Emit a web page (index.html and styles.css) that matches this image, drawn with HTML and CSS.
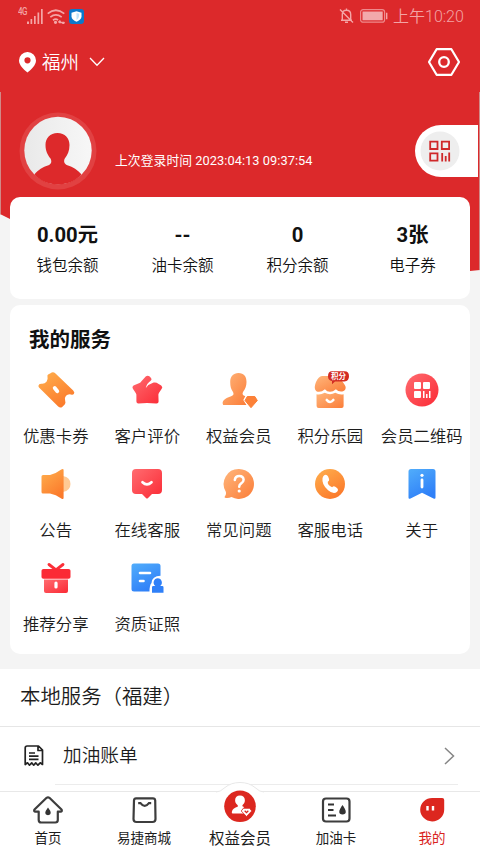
FILE: index.html
```html
<!DOCTYPE html>
<html lang="zh-CN">
<head>
<meta charset="utf-8">
<title>我的</title>
<link rel="stylesheet" href="styles.css">
</head>
<body>
<svg class="defs" width="0" height="0" aria-hidden="true">
  <defs>
    <linearGradient id="orange" x1="0" y1="0" x2="0.6" y2="1"><stop offset="0" stop-color="#ffb04e"/><stop offset="1" stop-color="#fb7b2c"/></linearGradient>
    <linearGradient id="peach" x1="0" y1="0" x2="1" y2="1"><stop offset="0" stop-color="#ffb67c"/><stop offset="1" stop-color="#fb7d38"/></linearGradient>
    <linearGradient id="red" x1="0" y1="0" x2="1" y2="1"><stop offset="0" stop-color="#ff6c70"/><stop offset="1" stop-color="#fb2a35"/></linearGradient>
    <linearGradient id="blue" x1="0" y1="0" x2="0.5" y2="1"><stop offset="0" stop-color="#51adfb"/><stop offset="1" stop-color="#2f80f8"/></linearGradient>
    <linearGradient id="face" x1="0" y1="0" x2="1" y2="0"><stop offset="0" stop-color="#e9e9e9"/><stop offset="1" stop-color="#f7f7f7"/></linearGradient>
  </defs>
</svg>
<div class="page">
  <header class="hero">
    <div class="status">
      <span class="net">4G</span>
      <svg class="signal" width="16" height="15" viewBox="0 0 16 15" fill="#f4a5a6"><path d="M0 12.500h2V15H0zM3.500 10h1.700v5H3.500zM7 7h1.700v8H7zM10.500 3.500h1.700v11.500h-1.700zM14 0h1.700v15H14z"/></svg>
      <svg class="wifi" width="18" height="15" viewBox="0 0 18 15" fill="none" stroke="#f4a5a6" stroke-width="1.700"><path d="M.7 4.600q8-6.700 16.600 0M3.300 8.100q5.500-4.500 11.400 0M6 11.200q2.800-2.100 5 0"/><circle cx="8.500" cy="13.300" r=".8"/><path d="M12 13.500h5M13.500 11.700l-2 1.800M15.500 15l2-1.800"/></svg>
      <svg class="shield" width="15" height="15" viewBox="0 0 15 15"><rect width="15" height="15" rx="3" fill="#0c78cb"/><path d="M7.500 2.300l5 1.500v3.700c0 2.400-2.200 4.200-5 5.200-2.800-1-5-2.800-5-5.200V3.800z" fill="#fff"/><path d="M7.500 4v7q2.700-1.500 2.800-6.200z" fill="#bfe3fa"/></svg>
      <svg class="bell" width="15" height="16" viewBox="0 0 15 16" fill="none" stroke="#f4a5a6" stroke-width="1.400"><path d="M2 12.200h11M3.300 12V6.500q0-4.200 4.200-4.200t4.200 4.200V12M7.500 .5v1.800M6 14.300h3M1 1.500l13 13"/></svg>
      <svg class="battery" width="28" height="14" viewBox="0 0 28 14"><rect x=".6" y=".6" width="24" height="12.600" rx="2.500" fill="none" stroke="#ee8a8c" stroke-width="1.200"/><rect x="2.500" y="2.500" width="20.200" height="8.800" fill="#f2a9ab"/><path d="M26.700 3.800v6.400" stroke="#f4a5a6" stroke-width="1.400"/></svg>
      <span class="clock">上午10:20</span>
    </div>
    <div class="location">
      <svg width="17" height="21" viewBox="0 0 17 21"><path fill="#fff" fill-rule="evenodd" d="M8.500 0A8.400 8.400 0 0 1 17 8.400C17 13 12.500 17 8.500 20.600 4.500 17 0 13 0 8.400A8.400 8.400 0 0 1 8.500 0zm0 5.200a3.100 3.100 0 1 0 0 6.200 3.100 3.100 0 0 0 0-6.200z"/></svg>
      <span class="city">福州</span>
      <svg class="chevron" width="16" height="10" viewBox="0 0 16 10" fill="none" stroke="#fff" stroke-width="1.300"><path d="M1 1l7 7.200L15 1"/></svg>
      <svg class="settings" width="32" height="28" viewBox="0 0 32 28" fill="none" stroke="#fff"><path stroke-width="2.200" stroke-linejoin="round" d="M8.600 1.200h14.800L31 14l-7.600 12.800H8.600L1 14z"/><circle cx="16" cy="14" r="4.800" stroke-width="2.300"/></svg>
    </div>
    <div class="profile">
      <svg class="avatar" width="78" height="78" viewBox="0 0 78 78"><circle cx="39" cy="39" r="38.500" fill="#e14142"/><circle cx="39" cy="38.500" r="33.700" fill="url(#face)"/><path fill="#dd292b" d="M38.500 21c7.500 0 12 5 12 12 0 6-2 10-4.700 13.500-1.500 3-.5 5.500 2.500 6.700 6 2 10 4.500 14.200 9.300-6 6.500-14 9.900-23.500 9.900s-17.500-3.400-23.700-9.900c4.200-4.800 8.200-7.300 14.200-9.300 3-1.200 3.500-3.700 2-6.700-2.800-3.500-5-7.500-5-13.500 0-7 4.500-12 12-12z"/></svg>
      <p class="last-login">上次登录时间 2023:04:13 09:37:54</p>
      <div class="qr">
        <svg width="40" height="40" viewBox="0 0 40 40"><circle cx="20" cy="20" r="19.500" fill="#eee"/><g fill="none" stroke="#cf292a" stroke-width="1.800"><path d="M10.200 10.700h7.300V18h-7.300zM21.800 10.700h7.300V18h-7.300zM10.200 22.300h7.300v7.300h-7.300zM22.200 22v8.500M25.700 25v5.500M29.200 21.500v9"/></g></svg>
      </div>
    </div>
  </header>

  <section class="card balances">
    <div class="balance"><strong>0.00元</strong><span>钱包余额</span></div>
    <div class="balance"><strong>--</strong><span>油卡余额</span></div>
    <div class="balance"><strong>0</strong><span>积分余额</span></div>
    <div class="balance"><strong>3张</strong><span>电子券</span></div>
  </section>

  <section class="card services">
    <h2>我的服务</h2>
    <div class="grid">
      <div class="service">
        <svg width="40" height="40" viewBox="0 0 40 40"><path fill="url(#orange)" d="M14.500 3.200q2.500-2 5 .2l17.700 17q2 2 .6 3.600-1 1-2.800.4-3-.8-5 1.400-2 2.300-.8 5.200.7 2-.3 3.200l-2.700 2.800q-2 1.400-4-.5L3 17.600q-1.400-1.700.2-3.300 1-.8 2.600-.6 2.800.2 4.700-2 1.700-2.200 1-5-.5-1.500.6-2.200z"/><path d="M18.700 18l2.600 3.200" stroke="#fff" stroke-width="3.800" stroke-linecap="round"/></svg>
        <span>优惠卡券</span></div>
      <div class="service">
        <svg width="40" height="40" viewBox="0 0 40 40"><path fill="url(#red)" d="M18.700 6.400q2-1.600 4 .2l1.500 1.700q1 1.600-.8 2.800-3.800 2.500-4.600 7 3.200-4.200 7.800-5.500 1.600-.5 3 .2l4.600 2.600q2 1.600.5 3.300l-2.800 4.200q-.7 1-.5 2.500l.2 6q0 2.200-2.500 2L20 32.900l-8.600.6q-2 0-2-2v-6q.2-1.500-.7-2.500l-2.800-4.200q-1.300-2 .6-3.200l6-2.500q1-.4 1.700-1.500z"/></svg>
        <span>客户评价</span></div>
      <div class="service">
        <svg width="40" height="40" viewBox="0 0 40 40"><path fill="url(#peach)" d="M19.500 3c5.500 0 8 3.500 8 9 0 4-1.200 7-3.200 9.500-1.500 2.500-.5 3.700 2 4.700l-2 3.800 3.200 5H4.200C2.200 31 6 28.500 11.500 26.500c3.500-1.500 3.500-2.500 2.200-5-1.700-2.500-2.500-5-2.500-9.500 0-5.500 3-9 8.300-9z"/><path fill="#fc8138" stroke="#fc8138" stroke-linejoin="round" d="M28.300 26.500h7.500l2.500 4-6.300 7.200-6-7.200z"/></svg>
        <span>权益会员</span></div>
      <div class="service">
        <svg width="40" height="40" viewBox="0 0 40 40"><path fill="url(#peach)" d="M6 12q2.500-5.500 6-6h16q6 7 7.500 10.500c.8 3-1.500 5-4.500 5q-3 0-5.100-2.200Q23 21.800 20 21.800t-5.100-2.500Q12 21.800 9 21.800c-4 0-5.500-3.500-3-9.800z"/><path fill="url(#peach)" d="M6.500 24.200q4 .8 8.200-1.400 5.300 2.700 10.600 0 4 2.200 8.300 1.400V36q0 2-2 2h-23q-2 0-2-2z"/><path fill="none" stroke="#fff" stroke-width="2.700" stroke-linecap="round" d="M16.800 30q3.200 4 6.500 0"/><path fill="#d32b22" d="M22 1.200h12.500q4.500 0 4.500 5t-4.500 5.300h-9.500L22 14.300v-3.300q-4-.5-4-4.800 0-5 4-5z"/><text class="tag" x="21" y="9.200">积分</text></svg>
        <span>积分乐园</span></div>
      <div class="service">
        <svg width="40" height="40" viewBox="0 0 40 40"><circle cx="20" cy="20" r="16.500" fill="url(#red)"/><path fill="#fff" d="M13 12h5q1 0 1 1v5q0 1-1 1h-5q-1 0-1-1v-5q0-1 1-1zM22 12h5q1 0 1 1v5q0 1-1 1h-5q-1 0-1-1v-5q0-1 1-1zM13 21h5q1 0 1 1v5q0 1-1 1h-5q-1 0-1-1v-5q0-1 1-1zM21 21h1.500v7H21zM24 24h1.500v4H24zM27 21h1.500v7H27z"/></svg>
        <span>会员二维码</span></div>

      <div class="service">
        <svg width="40" height="40" viewBox="0 0 40 40"><path fill="#ffca94" d="M27 12q7.500 1.500 7.500 8T27 28z"/><path fill="url(#orange)" d="M7 11h7q6-1.500 11.300-5.500 2.300-1.200 2.300.8v27.500q0 2-2.300.7Q20 30.500 14 29.500H7q-1.500 0-1.500-1.500V12.500Q5.500 11 7 11z"/></svg>
        <span>公告</span></div>
      <div class="service">
        <svg width="40" height="40" viewBox="0 0 40 40"><path fill="url(#red)" d="M9 5h22q4 0 4 4v17q0 4-4 4h-6l-4.200 4.200q-.8.700-1.600 0L15 30H9q-4 0-4-4V9q0-4 4-4z"/><path fill="none" stroke="#fff" stroke-width="2.700" stroke-linecap="round" d="M15.500 18.300q4.500 4.300 9 0"/></svg>
        <span>在线客服</span></div>
      <div class="service">
        <svg width="40" height="40" viewBox="0 0 40 40"><path fill="url(#peach)" d="M20 5a15 15 0 1 1-7.500 28q-3.500 1.500-6.500.7-1-.5 0-1.500 1.500-2 .8-4.500A15 15 0 0 1 20 5z"/><path fill="none" stroke="#fff" stroke-width="2.500" stroke-linecap="round" d="M15.800 16q.5-4 4.500-4t4.300 3.700q0 2.300-2.400 3.700-2 1.200-2 3.300"/><circle cx="20.200" cy="27" r="1.600" fill="#fff"/></svg>
        <span>常见问题</span></div>
      <div class="service">
        <svg width="40" height="40" viewBox="0 0 40 40"><circle cx="20" cy="20" r="15" fill="url(#orange)"/><path fill="#fff" d="M14.200 11.300q2.400-1.300 3.900 1.200l1 2.700q.4 1.700-1.300 2.500-.6 3.300 4.300 5.500 1.500-1.600 3.200-.5l2 1.500q1.700 1.700-.2 3.500-3.500 3.200-9-1.500-6.600-5.600-5.600-12 .4-2 1.700-2.900z"/></svg>
        <span>客服电话</span></div>
      <div class="service">
        <svg width="40" height="40" viewBox="0 0 40 40"><path fill="url(#blue)" d="M9 5h22q2.500 0 2.500 2.500v26q0 2-2 1L20 28.700 8.500 34.500q-2 1-2-1v-26Q6.500 5 9 5z"/><circle cx="20" cy="11.300" r="1.600" fill="#fff"/><path d="M20 16v7" stroke="#fff" stroke-width="2.800" stroke-linecap="round"/></svg>
        <span>关于</span></div>

      <div class="service">
        <svg width="40" height="40" viewBox="0 0 40 40"><path fill="none" stroke="#fb2f38" stroke-width="2.900" stroke-linecap="round" d="M13 6.500l7 5.500 7-5.500"/><path fill="#fb2a35" d="M7.500 11h25q2 0 2 1.700V19q0 1.700-2 1.700h-25q-2 0-2-1.700v-6.300q0-1.700 2-1.700z"/><path fill="url(#red)" d="M8 21.500h24V33q0 2-2 2H10q-2 0-2-2z"/><path d="M20 25v4" stroke="#fff" stroke-width="3.200" stroke-linecap="round"/></svg>
        <span>推荐分享</span></div>
      <div class="service">
        <svg width="40" height="40" viewBox="0 0 40 40"><path fill="url(#blue)" d="M7 5.500h24q2.500 0 2.500 2.500v9.800Q25 18 24.500 25q-2 2-2 8.500H7q-2.500 0-2.500-2.500V8Q4.500 5.500 7 5.500z"/><path d="M13 15h10M13 23h3.500" stroke="#fff" stroke-width="2.600" stroke-linecap="round"/><path fill="#2f80f8" d="M30.700 20.300a4.300 4.300 0 0 1 2.500 7.700h2q1.300 0 1.300 1.300v5.400H25v-5.400q0-1.300 1.300-1.300h2a4.300 4.300 0 0 1 2.400-7.700z"/></svg>
        <span>资质证照</span></div>
    </div>
  </section>

  <section class="local">
    <h3>本地服务（福建）</h3>
    <div class="row">
      <svg width="20" height="22" viewBox="0 0 20 22" fill="none" stroke="#222" stroke-width="1.700" stroke-linejoin="round"><path d="M1.200 19.500V3q0-2 2-2h11.300l4 4v14.500l-2.300-1.700-2.300 2.400-2.200-2.400-2 2.400-2-2.400-2.200 2.400-2-2.400zM14 1v4.500h4.500M5 8h6M5 11.200h9.500M5 14.300h9.500"/></svg>
      <span>加油账单</span>
      <svg class="go" width="11" height="18" viewBox="0 0 11 18" fill="none" stroke="#858585" stroke-width="1.500"><path d="M1 1l8.500 8L1 17"/></svg>
    </div>
  </section>

  <nav class="tabs">
    <div class="tab"><svg width="32" height="28" viewBox="0 0 32 28"><path fill="none" stroke="#3d3d3d" stroke-width="2.200" stroke-linejoin="round" d="M14.600 1.800q1.400-1 2.800 0L29.500 13.500q1 2-1 2.200h-2.700V24q0 2.500-2.500 2.500H9.200q-2.500 0-2.500-2.500v-8.300H3.500q-2-.2-1-2.200z"/><path fill="#333" d="M16 11.500q5.500 7 0 7.800-5.500-.8 0-7.800z"/></svg><span>首页</span></div>
    <div class="tab"><svg width="32" height="28" viewBox="0 0 32 28" fill="none" stroke="#3d3d3d" stroke-width="2.200"><path stroke-linejoin="round" d="M8 2.300h17q2 0 2.200 2L27.500 23q0 3-3 3h-16q-3 0-3-3L6 4.300q.2-2 2-2z"/><path d="M10.200 7.200h2.300q4.200 5.500 8.400 0h2.300"/></svg><span>易捷商城</span></div>
    <div class="tab member"><svg width="48" height="42" viewBox="0 0 48 42"><path fill="#fff" stroke="#e8e8e8" d="M-2 10.500Q5 10 9 5.500 15 .5 24 .5T39 5.500q4 4.500 11 5V44H-2z"/><circle cx="24" cy="24.300" r="15.800" fill="#dc271f"/><path fill="#fff" d="M24 13.500c3 0 4.900 2 4.900 4.700 0 2-.9 3.500-2.300 4.800-.7 1.200.4 1.800 1.700 2.100l-2 2.200 3.500 4.300H17q-1.500 0-1.200-1.600c.6-3 2.700-4 5-4.900 1.300-.5 1.400-1.200.7-2.100-1.500-1.300-2.400-2.800-2.400-4.800 0-2.700 1.900-4.700 4.900-4.700z"/><path fill="#fff" stroke="#dc271f" stroke-width=".8" d="M27.400 26.300h6.200l2.200 2.700-5.300 5.500-5.300-5.500z"/><path d="M28.700 28.800l1.800 1.800 1.800-1.800" fill="none" stroke="#dc271f" stroke-width="1.300"/></svg><span>权益会员</span></div>
    <div class="tab"><svg width="32" height="28" viewBox="0 0 32 28"><rect x="3" y="2.500" width="26.500" height="23" rx="3" fill="none" stroke="#3d3d3d" stroke-width="2.200"/><path d="M8 8.500h6M8 14h5.500M8 19.500h8" stroke="#333" stroke-width="2"/><path fill="#333" d="M22.500 9q6.500 9 0 9.500-6.500-.5 0-9.500z"/></svg><span>加油卡</span></div>
    <div class="tab active"><svg width="32" height="28" viewBox="0 0 32 28"><path fill="#dc271f" d="M16.500 2h9.700q2 0 2 2v9.700A12 11.700 0 1 1 16.500 2z"/><path d="M11.500 10v4.500M17 10v4.500" stroke="#fff" stroke-width="2.400"/></svg><span>我的</span></div>
  </nav>
</div>
</body>
</html>
```
FILE: styles.css
```css
* { box-sizing: border-box; margin: 0; padding: 0; }
body {
  width: 480px;
  height: 853px;
  overflow: hidden;
  background: #f4f4f4;
  color: #1c1c1c;
  font-family: Roboto, "Noto Sans CJK SC", sans-serif;
}
svg { display: block; flex: none; }
.defs { position: absolute; }
.page { position: relative; height: 853px; display: flex; flex-direction: column; }
.page::before {
  content: "";
  position: absolute;
  inset: 0 0 auto;
  height: 272px;
  background:
    linear-gradient(#d08a88, #d08a88) 0 92px / 1px 180px no-repeat,
    linear-gradient(#d08a88, #d08a88) 100% 92px / 1px 180px no-repeat,
    #dc292b;
  clip-path: polygon(0 0, 100% 0, 100% 270px, 470px 271px, 300px 272px, 10px 219px, 0 214px);
}
.hero { position: relative; height: 197px; flex: none; }
.status { display: flex; align-items: center; height: 32px; padding-left: 18px; color: #f3a4a5; }
.net { font-size: 8px; width: 9px; line-height: 10px; margin-top: -8px; font-weight: 500; white-space: nowrap; letter-spacing: -.5px; transform: scaleY(1.25); }
.wifi { margin-left: 4px; }
.shield { margin-left: 4px; }
.bell { margin-left: auto; }
.battery { margin-left: 6px; }
.clock { margin: 1px 16px 0 5px; font-size: 16px; line-height: 20px; font-weight: 350; width: 71px; white-space: nowrap; }
.location { display: flex; align-items: center; height: 60px; padding: 0 20px 0 19px; color: #fff; }
.city { margin: 1px 0 0 6px; font-size: 18.500px; line-height: 24px; font-weight: 350; }
.chevron { margin-left: 10px; }
.settings { margin-left: auto; }
.profile { display: flex; align-items: center; margin-top: 20px; height: 78px; padding-left: 19px; color: #fff; }
.last-login { margin: 20px 0 0 18px; font-size: 12.800px; line-height: 18px; letter-spacing: .05px; white-space: nowrap; font-weight: 400; }
.qr { margin-left: auto; margin-right: 2px; width: 63px; height: 52px; padding: 6px 0 0 5px; background: #fff; border-radius: 26px 0 0 26px; }

.card { position: relative; margin: 0 10px; background: #fff; border-radius: 10px; flex: none; }
.balances { height: 102px; display: grid; grid-template-columns: repeat(4, 1fr); padding-top: 25px; }
.balance { display: flex; flex-direction: column; align-items: center; color: #111; }
.balance strong { font-size: 20.300px; line-height: 27px; font-weight: 700; }
.balance span { font-size: 15.500px; line-height: 22px; margin-top: 6px; font-weight: 350; }
.services { margin-top: 6px; height: 349px; }
.services h2 { padding: 20px 0 0 19px; font-size: 20.500px; line-height: 30px; font-weight: 700; color: #111; }
.grid { display: grid; grid-template-columns: repeat(5, 91.500px); grid-auto-rows: 94px; margin-top: 15px; }
.service { display: flex; flex-direction: column; align-items: center; }
.service span { margin-top: 15px; font-size: 16.400px; line-height: 24px; font-weight: 350; white-space: nowrap; }
.tag { font-size: 7.500px; font-weight: 700; fill: #fff; font-family: "Noto Sans CJK SC", sans-serif; }

.local { margin-top: 15px; height: 122px; flex: none; background: #fff; }
.local h3 { height: 58px; padding-left: 20px; border-bottom: 1px solid #e6e6e6; font-size: 20.400px; line-height: 56px; font-weight: 350; }
.row { display: flex; align-items: center; height: 58px; margin-right: 22px; padding-left: 24px; }
.row span { margin-left: 19px; font-size: 18.700px; font-weight: 350; line-height: 28px; }
.go { margin-left: auto; margin-right: 3px; }
.local::after { content: ""; display: block; height: 1px; margin: -1px 22px 0 55px; background: #ececec; }

.tabs { position: relative; display: grid; grid-template-columns: repeat(5, 96px); height: 62px; border-top: 1px solid #e8e8e8; background: #fff; flex: none; }
.tab { display: flex; flex-direction: column; align-items: center; padding-top: 4px; }
.tab span { margin-top: 4px; font-size: 13.500px; line-height: 20px; white-space: nowrap; }
.member svg { margin-top: -14px; }
.member span { margin-top: 5px; font-size: 15.500px; }
.active { color: #d9221d; }
```
